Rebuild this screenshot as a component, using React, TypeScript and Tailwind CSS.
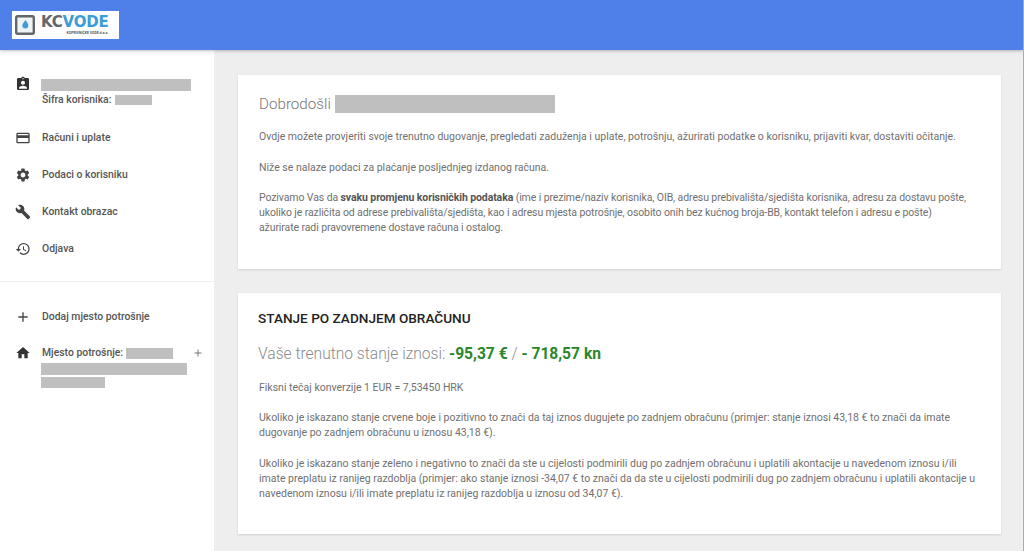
import React from "react";
import { MdAssignmentInd, MdCreditCard, MdSettings, MdBuild, MdHistory, MdAdd, MdHome } from "react-icons/md";

const navItems = [
  { label: "Računi i uplate", icon: MdCreditCard },
  { label: "Podaci o korisniku", icon: MdSettings },
  { label: "Kontakt obrazac", icon: MdBuild },
  { label: "Odjava", icon: MdHistory },
];

function Redacted({ className }: { className: string }) {
  return <span className={`block bg-[#bfbfbf] ${className}`} />;
}

function Logo() {
  return (
    <div className="flex h-[28px] w-[107px] items-center bg-white pl-[3px]">
      <svg viewBox="0 0 20 20" className="h-[20px] w-[20px] shrink-0">
        <rect x="1.2" y="1.2" width="17.6" height="17.6" rx="1.5" fill="#eef3f6" stroke="#63676a" strokeWidth="2.4" />
        <path d="M10.5 5c1.5 2.2 2.8 3.8 2.8 5.6a3 3 0 0 1-6 0c0-1.8 1.7-3.4 3.2-5.6z" fill="#3d9bd8" />
      </svg>
      <div className="ml-[6px] flex flex-col items-end">
        <div className="text-[15px] leading-[15px] font-bold tracking-[-0.2px] font-['DejaVu_Sans',sans-serif]">
          <span className="text-[#63676a]">KC</span>
          <span className="text-[#3d9bd8]">VODE</span>
        </div>
        <div className="mt-[1px] text-[3.5px] leading-[5px] font-bold text-[#555] font-['Roboto',sans-serif]">KOPRIVNIČKE VODE d.o.o.</div>
      </div>
    </div>
  );
}

export default function App() {
  return (
    <div className="flex h-[551px] w-[1024px] flex-col overflow-hidden border-r border-[#a3abc9] bg-[#eeeeee] font-['Roboto',sans-serif]">
      {/* Header */}
      <header className="relative z-10 flex h-[50px] shrink-0 items-center bg-[#4f7fe8] pl-[12px] shadow-[0_1px_3px_rgba(0,0,0,0.25)]">
        <Logo />
      </header>

      <div className="flex min-h-0 flex-1">
        {/* Sidebar */}
        <aside className="w-[214px] shrink-0 bg-white text-[10.4px] font-medium text-[#555]">
          <div className="flex items-start pl-[15px] pr-[24px] pt-[29px]">
            <MdAssignmentInd className="mt-[-3px] h-[16px] w-[16px] shrink-0 text-[#333]" />
            <div className="ml-[10px]">
              <Redacted className="h-[12px] w-[150px]" />
              <div className="mt-[3px] flex h-[12px] items-center pl-[1px] leading-[12px]">
                Šifra korisnika:
                <Redacted className="ml-[4px] h-[10px] w-[37px]" />
              </div>
            </div>
          </div>

          <nav className="mt-[13px]">
            {navItems.map((item) => {
              const Icon = item.icon;
              return (
                <div key={item.label} className="flex h-[37px] items-center pl-[15px]">
                  <Icon className="h-[16px] w-[16px] shrink-0 text-[#444]" />
                  <span className="ml-[11px]">{item.label}</span>
                </div>
              );
            })}
          </nav>

          <div className="mt-[14px] border-t border-[#eeeeee]" />

          <div className="mt-[16px] flex h-[37px] items-center pl-[15px]">
            <MdAdd className="h-[16px] w-[16px] shrink-0 text-[#444]" />
            <span className="ml-[11px]">Dodaj mjesto potrošnje</span>
          </div>

          <div className="mt-[12px] flex items-start pl-[15px] pr-[11px]">
            <MdHome className="mt-[-2px] h-[16px] w-[16px] shrink-0 text-[#333]" />
            <div className="ml-[10px] w-[146px]">
              <div className="flex h-[12px] items-center pl-[1px] leading-[12px]">
                Mjesto potrošnje:
                <Redacted className="ml-[3px] h-[11px] w-[47px]" />
              </div>
              <Redacted className="mt-[4px] h-[12px] w-[146px]" />
              <Redacted className="mt-[2px] h-[11px] w-[64px]" />
            </div>
            <MdAdd className="ml-[5px] h-[12px] w-[12px] shrink-0 text-[#777]" />
          </div>
        </aside>

        {/* Content */}
        <main className="flex min-w-0 flex-1 flex-col gap-[24px] pl-[24px] pr-[22px] pt-[25px] text-[10.5px] leading-[15px] text-[#707070]">
          <section className="h-[194px] bg-white px-[21px] pt-[18px] shadow-[0_1px_2px_rgba(0,0,0,0.12)]">
            <h1 className="flex h-[22px] items-center text-[15.2px] font-light text-[#777]">
              Dobrodošli
              <Redacted className="ml-[4px] h-[18px] w-[220px]" />
            </h1>
            <p className="mt-[14px]">
              Ovdje možete provjeriti svoje trenutno dugovanje, pregledati zaduženja i uplate, potrošnju, ažurirati podatke o korisniku, prijaviti kvar, dostaviti očitanje.
            </p>
            <p className="mt-[16px]">Niže se nalaze podaci za plaćanje posljednjeg izdanog računa.</p>
            <p className="mt-[15px] tracking-[-0.1px]">
              Pozivamo Vas da <b className="font-bold text-[#555]">svaku promjenu korisničkih podataka</b> (ime i prezime/naziv korisnika, OIB, adresu prebivališta/sjedišta korisnika, adresu za dostavu pošte, ukoliko je različita od adrese prebivališta/sjedišta, kao i adresu mjesta potrošnje, osobito onih bez kućnog broja-BB, kontakt telefon i adresu e pošte)<br />ažurirate radi pravovremene dostave računa i ostalog.
            </p>
          </section>

          <section className="h-[241px] bg-white px-[20px] pt-[17px] shadow-[0_1px_2px_rgba(0,0,0,0.12)]">
            <h2 className="text-[13.6px] font-medium leading-[16px] text-[#222]">STANJE PO ZADNJEM OBRAČUNU</h2>
            <div className="mt-[16px] text-[15.6px] font-light leading-[24px] text-[#8a8a8a]">
              Vaše trenutno stanje iznosi: <b className="font-bold text-[#2b872b]">-95,37 €</b> / <b className="font-bold text-[#2b872b]">- 718,57 kn</b>
            </div>
            <p className="mt-[14px] pl-[1px]">Fiksni tečaj konverzije 1 EUR = 7,53450 HRK</p>
            <p className="mt-[15px] pl-[1px]">
              Ukoliko je iskazano stanje crvene boje i pozitivno to znači da taj iznos dugujete po zadnjem obračunu (primjer: stanje iznosi 43,18 € to znači da imate dugovanje po zadnjem obračunu u iznosu 43,18 €).
            </p>
            <p className="mt-[16px] pl-[1px]">
              Ukoliko je iskazano stanje zeleno i negativno to znači da ste u cijelosti podmirili dug po zadnjem obračunu i uplatili akontacije u navedenom iznosu i/ili imate preplatu iz ranijeg razdoblja (primjer: ako stanje iznosi -34,07 € to znači da da ste u cijelosti podmirili dug po zadnjem obračunu i uplatili akontacije u navedenom iznosu i/ili imate preplatu iz ranijeg razdoblja u iznosu od 34,07 €).
            </p>
          </section>
        </main>
      </div>
    </div>
  );
}
